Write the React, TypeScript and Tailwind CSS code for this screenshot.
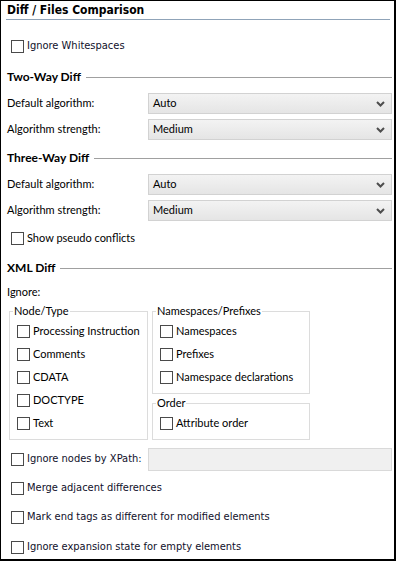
import React from 'react';

const ui = "font-['Segoe_UI','Lato','Open_Sans',sans-serif] text-[11px] text-black whitespace-nowrap";
const head = "font-['Segoe_UI','Lato','Open_Sans',sans-serif] text-[12px] font-bold text-black whitespace-nowrap";
const tahoma = "font-['DejaVu_Sans_Condensed','Liberation_Sans',sans-serif] text-[11px] text-[#10102a] whitespace-nowrap";

function Box() {
  return <span className="w-[13px] h-[13px] shrink-0 border border-[#4a4a4a] bg-white" />;
}

function Check({ label, tah = false, cls = '' }: { label: string; tah?: boolean; cls?: string }) {
  return (
    <label className={`flex items-center gap-[3px] ${cls}`}>
      <Box />
      <span className={tah ? tahoma : ui}>{label}</span>
    </label>
  );
}

function Heading({ title, cls = '' }: { title: string; cls?: string }) {
  return (
    <div className={`flex items-center h-[20px] ${cls}`}>
      <span className={head}>{title}</span>
      <span className="flex-1 h-px bg-[#a0a0a0] ml-[5px]" />
    </div>
  );
}

function SelectRow({ label, value, cls = '' }: { label: string; value: string; cls?: string }) {
  return (
    <div className={`flex items-center h-[21px] ${cls}`}>
      <span className={`${ui} w-[141px]`}>{label}</span>
      <div className="flex-1 h-[21px] flex items-center justify-between pl-[4px] pr-[6px] border border-[#d2d2d2] bg-gradient-to-b from-[#f3f3f3] to-[#e5e5e5]">
        <span className={ui}>{value}</span>
        <svg width="9" height="6" viewBox="0 0 9 6">
          <path d="M1 1 L4.5 4.5 L8 1" fill="none" stroke="#4d4d4d" strokeWidth="2" />
        </svg>
      </div>
    </div>
  );
}

function Group({ legend, w, h, items, cls = '' }: { legend: string; w: string; h: string; items: string[]; cls?: string }) {
  return (
    <div className={`relative border border-[#dcdcdc] ${w} ${h} pt-[8px] pl-[7px] ${cls}`}>
      <span className={`${ui} absolute -top-[9px] left-[3px] bg-white px-[1px]`}>{legend}</span>
      {items.map((it) => (
        <Check key={it} label={it} cls="h-[23px]" />
      ))}
    </div>
  );
}

export default function App() {
  return (
    <div className="w-[396px] h-[561px] bg-white border-l border-t border-r-2 border-b-2 border-black pl-[6px] pr-[2px] flex flex-col">
      <div className="h-[19px] flex items-center border-b border-[#8fa3b8] -ml-[1px] mr-[2px] pl-[1px]">
        <span className="font-['DejaVu_Sans_Condensed','Liberation_Sans',sans-serif] text-[12px] font-bold text-black">
          Diff / Files Comparison
        </span>
      </div>

      <Check label="Ignore Whitespaces" tah cls="h-[20px] mt-[16px] pl-[4px]" />

      <Heading title="Two-Way Diff" cls="mt-[11px]" />
      <SelectRow label="Default algorithm:" value="Auto" cls="mt-[6px]" />
      <SelectRow label="Algorithm strength:" value="Medium" cls="mt-[5px]" />

      <Heading title="Three-Way Diff" cls="mt-[8px]" />
      <SelectRow label="Default algorithm:" value="Auto" cls="mt-[6px]" />
      <SelectRow label="Algorithm strength:" value="Medium" cls="mt-[5px]" />
      <Check label="Show pseudo conflicts" cls="h-[20px] mt-[7px] pl-[4px]" />

      <Heading title="XML Diff" cls="mt-[10px]" />
      <div className={`${ui} h-[20px] flex items-center mt-[4px]`}>Ignore:</div>

      <div className="flex gap-[4px] ml-[2px] mt-[9px]">
        <Group
          legend="Node/Type"
          w="w-[139px]"
          h="h-[129px]"
          items={['Processing Instruction', 'Comments', 'CDATA', 'DOCTYPE', 'Text']}
        />
        <div className="flex flex-col gap-[9px]">
          <Group
            legend="Namespaces/Prefixes"
            w="w-[158px]"
            h="h-[83px]"
            items={['Namespaces', 'Prefixes', 'Namespace declarations']}
          />
          <Group legend="Order" w="w-[158px]" h="h-[37px]" items={['Attribute order']} />
        </div>
      </div>

      <div className="flex items-center h-[23px] mt-[8px]">
        <div className="w-[141px] pl-[4px]">
          <Check label="Ignore nodes by XPath:" tah />
        </div>
        <div className="flex-1 h-[23px] border border-[#d9d9d9] bg-[#f0f0f0]" />
      </div>
      <Check label="Merge adjacent differences" tah cls="h-[20px] mt-[7px] pl-[4px]" />
      <Check label="Mark end tags as different for modified elements" tah cls="h-[20px] mt-[9px] pl-[4px]" />
      <Check label="Ignore expansion state for empty elements" tah cls="h-[20px] mt-[10px] pl-[4px]" />
    </div>
  );
}
